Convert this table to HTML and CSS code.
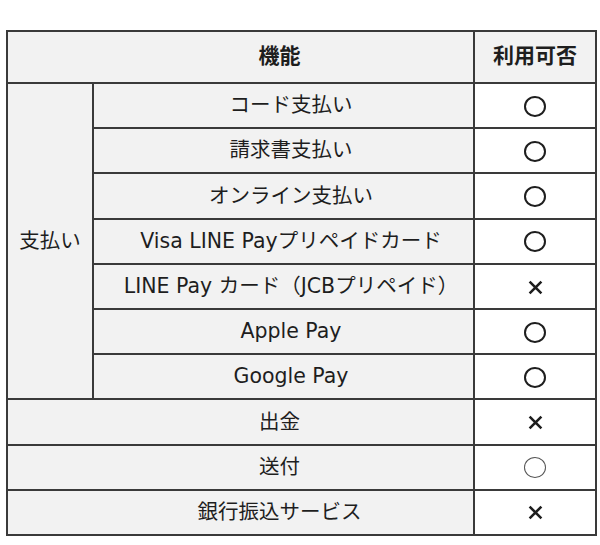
FILE: index.html
```html
<!DOCTYPE html>
<html lang="ja">
<head>
<meta charset="utf-8">
<link rel="stylesheet" href="styles.css">
</head>
<body>
<table class="feat">
  <colgroup>
    <col class="c1"><col class="c2"><col class="c3">
  </colgroup>
  <thead>
    <tr class="head">
      <th class="wide" colspan="2">機能</th>
      <th>利用可否</th>
    </tr>
  </thead>
  <tbody>
    <tr><td class="lbl" rowspan="7">支払い</td><td class="lbl sub">コード支払い</td><td class="val"><span class="ok"></span></td></tr>
    <tr><td class="lbl sub">請求書支払い</td><td class="val"><span class="ok"></span></td></tr>
    <tr><td class="lbl sub">オンライン支払い</td><td class="val"><span class="ok"></span></td></tr>
    <tr><td class="lbl sub">Visa LINE Payプリペイドカード</td><td class="val"><span class="ok"></span></td></tr>
    <tr><td class="lbl sub">LINE Pay カード（JCBプリペイド）</td><td class="val"><svg class="ng" viewBox="0 0 14 14" width="15" height="15"><path d="M1.5 1.5 L12.5 12.5 M12.5 1.5 L1.5 12.5"/></svg></td></tr>
    <tr><td class="lbl sub">Apple Pay</td><td class="val"><span class="ok"></span></td></tr>
    <tr><td class="lbl sub">Google Pay</td><td class="val"><span class="ok"></span></td></tr>
    <tr><td class="lbl wide" colspan="2">出金</td><td class="val"><svg class="ng" viewBox="0 0 14 14" width="15" height="15"><path d="M1.5 1.5 L12.5 12.5 M12.5 1.5 L1.5 12.5"/></svg></td></tr>
    <tr><td class="lbl wide" colspan="2">送付</td><td class="val"><span class="ok thin"></span></td></tr>
    <tr><td class="lbl wide" colspan="2">銀行振込サービス</td><td class="val"><svg class="ng" viewBox="0 0 14 14" width="15" height="15"><path d="M1.5 1.5 L12.5 12.5 M12.5 1.5 L1.5 12.5"/></svg></td></tr>
  </tbody>
</table>
</body>
</html>
```
FILE: styles.css
```css
html, body {
  margin: 0;
  padding: 0;
  background: #ffffff;
}
body {
  padding: 30px 0 0 6px;
  font-family: "DejaVu Sans", "Noto Sans CJK JP", sans-serif;
  color: #1e1e1e;
}
.feat {
  border-collapse: collapse;
  table-layout: fixed;
  width: 591px;
  border: 2px solid #333333;
}
.c1 { width: 86px; }
.c2 { width: 381px; }
.c3 { width: 122px; }
.feat th, .feat td {
  border: 2px solid #3a3a3a;
  text-align: center;
  vertical-align: middle;
  padding: 0;
  font-size: 20.5px;
  line-height: 1.2;
}
.head th {
  height: 50px;
  background: #f2f2f2;
  font-weight: 700;
  font-size: 21px;
}
.feat .wide {
  padding-left: 78px;
}
.feat .sub {
  padding-left: 15px;
}
tbody tr {
  height: 45.2px;
}
.lbl {
  background: #f2f2f2;
}
.val {
  background: #ffffff;
}
.ok {
  display: inline-block;
  width: 18px;
  height: 17px;
  border: 2px solid #1e1e1e;
  border-radius: 50%;
  vertical-align: middle;
}
.ok.thin {
  border-color: #555555;
  width: 20px;
  height: 19px;
  border-width: 1.5px;
}
.ng {
  display: inline-block;
  vertical-align: middle;
  stroke: #1e1e1e;
  stroke-width: 2.4;
  fill: none;
}
```
